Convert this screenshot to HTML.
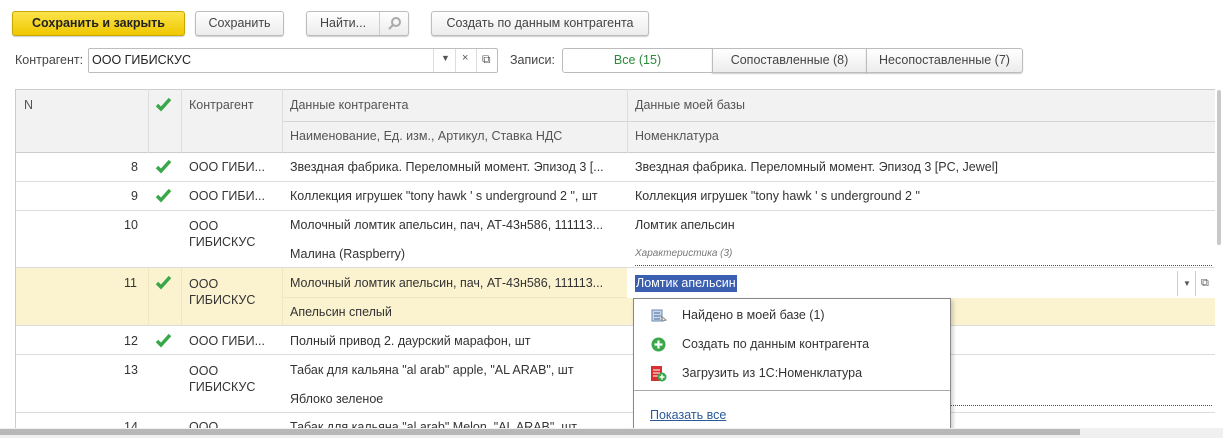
<!DOCTYPE html>
<html><head><meta charset="utf-8"><style>
*{box-sizing:border-box;margin:0;padding:0}
body{width:1223px;height:438px;background:#fff;font-family:"Liberation Sans","Noto Sans CJK SC",sans-serif;font-size:12.5px;color:#333;position:relative;overflow:hidden}
.a{position:absolute;white-space:nowrap}
.btn{position:absolute;height:25px;border:1px solid #bcbcbc;border-radius:3px;background:linear-gradient(#fff,#ececec);box-shadow:0 1px 1px rgba(0,0,0,.2);text-align:center;line-height:23px;color:#444}
.cell{position:absolute;border-right:1px solid #e0e0e0}
.hl{position:absolute;height:1px;background:#dcdcdc}
.chk{position:absolute;width:18px;height:16px}
</style></head><body>
<div class="btn" style="left:12px;top:11px;width:173px;background:linear-gradient(#fbe34a,#f0c800);border-color:#c9a800;color:#222;font-weight:bold">Сохранить и закрыть</div>
<div class="btn" style="left:195px;top:11px;width:89px">Сохранить</div>
<div class="btn" style="left:306px;top:11px;width:103px;text-align:left;padding-left:13px">Найти...<span style="position:absolute;left:72px;top:0;bottom:0;border-left:1px solid #ccc;width:30px"><svg width="16" height="16" viewBox="0 0 16 16" style="position:absolute;left:7px;top:4px"><circle cx="9" cy="6" r="4" fill="none" stroke="#aaa" stroke-width="2"/><path d="M6 9l-4 4" stroke="#aaa" stroke-width="2"/></svg></span></div>
<div class="btn" style="left:431px;top:11px;width:218px">Создать по данным контрагента</div>

<div class="a" style="left:15px;top:53px;color:#444">Контрагент:</div>
<div class="a" style="left:88px;top:48px;width:410px;height:25px;border:1px solid #bdbdbd;border-radius:2px"></div>
<div class="a" style="left:92px;top:53px;color:#222">ООО ГИБИСКУС</div>
<div class="a" style="left:433px;top:49px;width:1px;height:23px;background:#ddd"></div>
<div class="a" style="left:455px;top:49px;width:1px;height:23px;background:#ddd"></div>
<div class="a" style="left:476px;top:49px;width:1px;height:23px;background:#ddd"></div>
<div class="a" style="left:441px;top:53px;font-size:9px;color:#555">▼</div>
<div class="a" style="left:462px;top:52px;font-size:11px;color:#555">×</div>
<div class="a" style="left:482px;top:52px;font-size:12px;color:#555">⧉</div>
<div class="a" style="left:510px;top:53px;color:#444">Записи:</div>
<div class="a" style="left:562px;top:48px;width:151px;height:25px;border:1px solid #bbb;border-radius:3px 0 0 3px;background:#fff;text-align:center;line-height:23px;color:#2a8a3a">Все (15)</div>
<div class="btn" style="left:712px;top:48px;width:155px;border-radius:0">Сопоставленные (8)</div>
<div class="btn" style="left:866px;top:48px;width:157px;border-radius:0 3px 3px 0">Несопоставленные (7)</div>

<!-- table -->
<div class="a" style="left:15px;top:89px;width:1200px;height:64px;background:#f2f2f2;border-top:1px solid #ccc"></div>
<div class="a" style="left:15px;top:89px;width:1px;height:349px;background:#ccc"></div>
<div class="hl" style="left:282px;top:121px;width:933px;background:#d4d4d4"></div>
<div class="hl" style="left:15px;top:152px;width:1200px;background:#ccc"></div>
<div class="a" style="left:148px;top:89px;width:1px;height:64px;background:#ddd"></div>
<div class="a" style="left:181px;top:89px;width:1px;height:64px;background:#ddd"></div>
<div class="a" style="left:282px;top:89px;width:1px;height:64px;background:#ddd"></div>
<div class="a" style="left:627px;top:89px;width:1px;height:64px;background:#ddd"></div>
<div class="a" style="left:24px;top:98px;color:#555">N</div>
<svg class="chk" style="left:155px;top:97px"><path d="M2 8l4 4 9-10" fill="none" stroke="#3aa84a" stroke-width="3.5"/></svg>
<div class="a" style="left:189px;top:98px;color:#555">Контрагент</div>
<div class="a" style="left:290px;top:98px;color:#555">Данные контрагента</div>
<div class="a" style="left:290px;top:129px;color:#555">Наименование, Ед. изм., Артикул, Ставка НДС</div>
<div class="a" style="left:635px;top:98px;color:#555">Данные моей базы</div>
<div class="a" style="left:635px;top:129px;color:#555">Номенклатура</div>

<!-- row 11 highlight -->
<div class="a" style="left:16px;top:268px;width:1199px;height:57px;background:#fbf2cf"></div>
<div class="a" style="left:627px;top:268px;width:588px;height:30px;background:#fff"></div>

<div class="hl" style="left:16px;top:181px;width:1199px"></div>
<div class="hl" style="left:16px;top:210px;width:1199px"></div>
<div class="hl" style="left:16px;top:267px;width:1199px"></div>
<div class="hl" style="left:16px;top:325px;width:1199px"></div>
<div class="hl" style="left:16px;top:354px;width:1199px"></div>
<div class="hl" style="left:16px;top:412px;width:1199px"></div>
<div class="a" style="left:148px;top:268px;width:1px;height:57px;background:#efe6c4"></div>
<div class="a" style="left:181px;top:268px;width:1px;height:57px;background:#efe6c4"></div>
<div class="a" style="left:282px;top:268px;width:1px;height:57px;background:#efe6c4"></div>
<div class="a" style="left:282px;top:297px;width:345px;height:1px;background:#efe6c4"></div>
<div class="a" style="left:635px;top:265px;width:577px;border-top:1px dotted #b02040"></div>
<div class="a" style="left:951px;top:405px;width:261px;border-top:1px dotted #b02040"></div>

<div class="a" style="left:131px;top:160px">8</div>
<svg class="chk" style="left:155px;top:159px"><path d="M2 8l4 4 9-10" fill="none" stroke="#3aa84a" stroke-width="3.5"/></svg>
<div class="a" style="left:189px;top:160px">ООО ГИБИ...</div>
<div class="a" style="left:290px;top:160px">Звездная фабрика. Переломный момент. Эпизод 3 [...</div>
<div class="a" style="left:635px;top:160px">Звездная фабрика. Переломный момент. Эпизод 3 [PC, Jewel]</div>

<div class="a" style="left:131px;top:189px">9</div>
<svg class="chk" style="left:155px;top:188px"><path d="M2 8l4 4 9-10" fill="none" stroke="#3aa84a" stroke-width="3.5"/></svg>
<div class="a" style="left:189px;top:189px">ООО ГИБИ...</div>
<div class="a" style="left:290px;top:189px">Коллекция игрушек "tony hawk ' s underground 2 ", шт</div>
<div class="a" style="left:635px;top:189px">Коллекция игрушек "tony hawk ' s underground 2 "</div>

<div class="a" style="left:124px;top:218px">10</div>
<div class="a" style="left:189px;top:218px;line-height:16px">ООО<br>ГИБИСКУС</div>
<div class="a" style="left:290px;top:218px">Молочный ломтик апельсин, пач, АТ-43н586, 111113...</div>
<div class="a" style="left:290px;top:247px">Малина (Raspberry)</div>
<div class="a" style="left:635px;top:218px">Ломтик апельсин</div>
<div class="a" style="left:635px;top:248px;font-size:10px;font-style:italic;color:#777">Характеристика (3)</div>

<div class="a" style="left:124px;top:276px">11</div>
<svg class="chk" style="left:155px;top:275px"><path d="M2 8l4 4 9-10" fill="none" stroke="#3aa84a" stroke-width="3.5"/></svg>
<div class="a" style="left:189px;top:276px;line-height:16px">ООО<br>ГИБИСКУС</div>
<div class="a" style="left:290px;top:276px">Молочный ломтик апельсин, пач, АТ-43н586, 111113...</div>
<div class="a" style="left:290px;top:305px">Апельсин спелый</div>
<div class="a" style="left:635px;top:275px;height:17px;background:#3a5fb0;color:#fff;padding:1px 1px 0 1px">Ломтик апельсин</div>
<div class="a" style="left:1177px;top:271px;width:1px;height:25px;background:#ccc"></div>
<div class="a" style="left:1195px;top:271px;width:1px;height:25px;background:#ccc"></div>
<div class="a" style="left:1183px;top:279px;font-size:8px;color:#555">▼</div>
<div class="a" style="left:1201px;top:277px;font-size:11px;color:#555">⧉</div>

<div class="a" style="left:124px;top:334px">12</div>
<svg class="chk" style="left:155px;top:333px"><path d="M2 8l4 4 9-10" fill="none" stroke="#3aa84a" stroke-width="3.5"/></svg>
<div class="a" style="left:189px;top:334px">ООО ГИБИ...</div>
<div class="a" style="left:290px;top:334px">Полный привод 2. даурский марафон, шт</div>

<div class="a" style="left:124px;top:363px">13</div>
<div class="a" style="left:189px;top:363px;line-height:16px">ООО<br>ГИБИСКУС</div>
<div class="a" style="left:290px;top:363px">Табак для кальяна "al arab" apple, "AL ARAB", шт</div>
<div class="a" style="left:290px;top:392px">Яблоко зеленое</div>
<div class="a" style="left:124px;top:420px">14</div>
<div class="a" style="left:189px;top:420px">ООО</div>
<div class="a" style="left:290px;top:420px">Табак для кальяна "al arab" Melon, "AL ARAB", шт</div>

<!-- popup -->
<div class="a" style="left:633px;top:298px;width:318px;height:140px;background:#fff;border:1px solid #888;box-shadow:2px 2px 4px rgba(0,0,0,.2)"></div>
<svg class="a" style="left:651px;top:308px" width="16" height="16"><rect x="1" y="2" width="10" height="11" fill="#c8d8ec" stroke="#6a88b0"/><path d="M3 5h6M3 8h6M3 11h6" stroke="#4a6890"/><path d="M10 8l5 4-3 1z" fill="#fff" stroke="#888"/></svg>
<div class="a" style="left:682px;top:308px">Найдено в моей базе (1)</div>
<svg class="a" style="left:651px;top:337px" width="15" height="15"><circle cx="7.5" cy="7.5" r="7" fill="#3aa84a"/><path d="M7.5 3.5v8M3.5 7.5h8" stroke="#fff" stroke-width="2.2"/></svg>
<div class="a" style="left:682px;top:337px">Создать по данным контрагента</div>
<svg class="a" style="left:651px;top:366px" width="16" height="16"><rect x="0" y="0" width="11" height="15" fill="#d83030"/><path d="M2 4h7M2 7h7M2 10h5" stroke="#fff"/><circle cx="11" cy="11" r="4.5" fill="#3aa84a"/><path d="M11 8.5v5M8.5 11h5" stroke="#fff" stroke-width="1.5"/></svg>
<div class="a" style="left:682px;top:366px">Загрузить из 1С:Номенклатура</div>
<div class="a" style="left:634px;top:390px;width:316px;height:1px;background:#aaa"></div>
<div class="a" style="left:650px;top:408px;color:#2a5a9a;text-decoration:underline">Показать все</div>

<!-- scrollbars -->
<div class="a" style="left:0;top:428px;width:1223px;height:10px;background:#f0f0f0"></div>
<div class="a" style="left:0;top:429px;width:1080px;height:6px;background:#b8b8b8"></div>
<div class="a" style="left:1217px;top:90px;width:4px;height:155px;background:#c8c8c8;border-radius:2px"></div>
</body></html>
